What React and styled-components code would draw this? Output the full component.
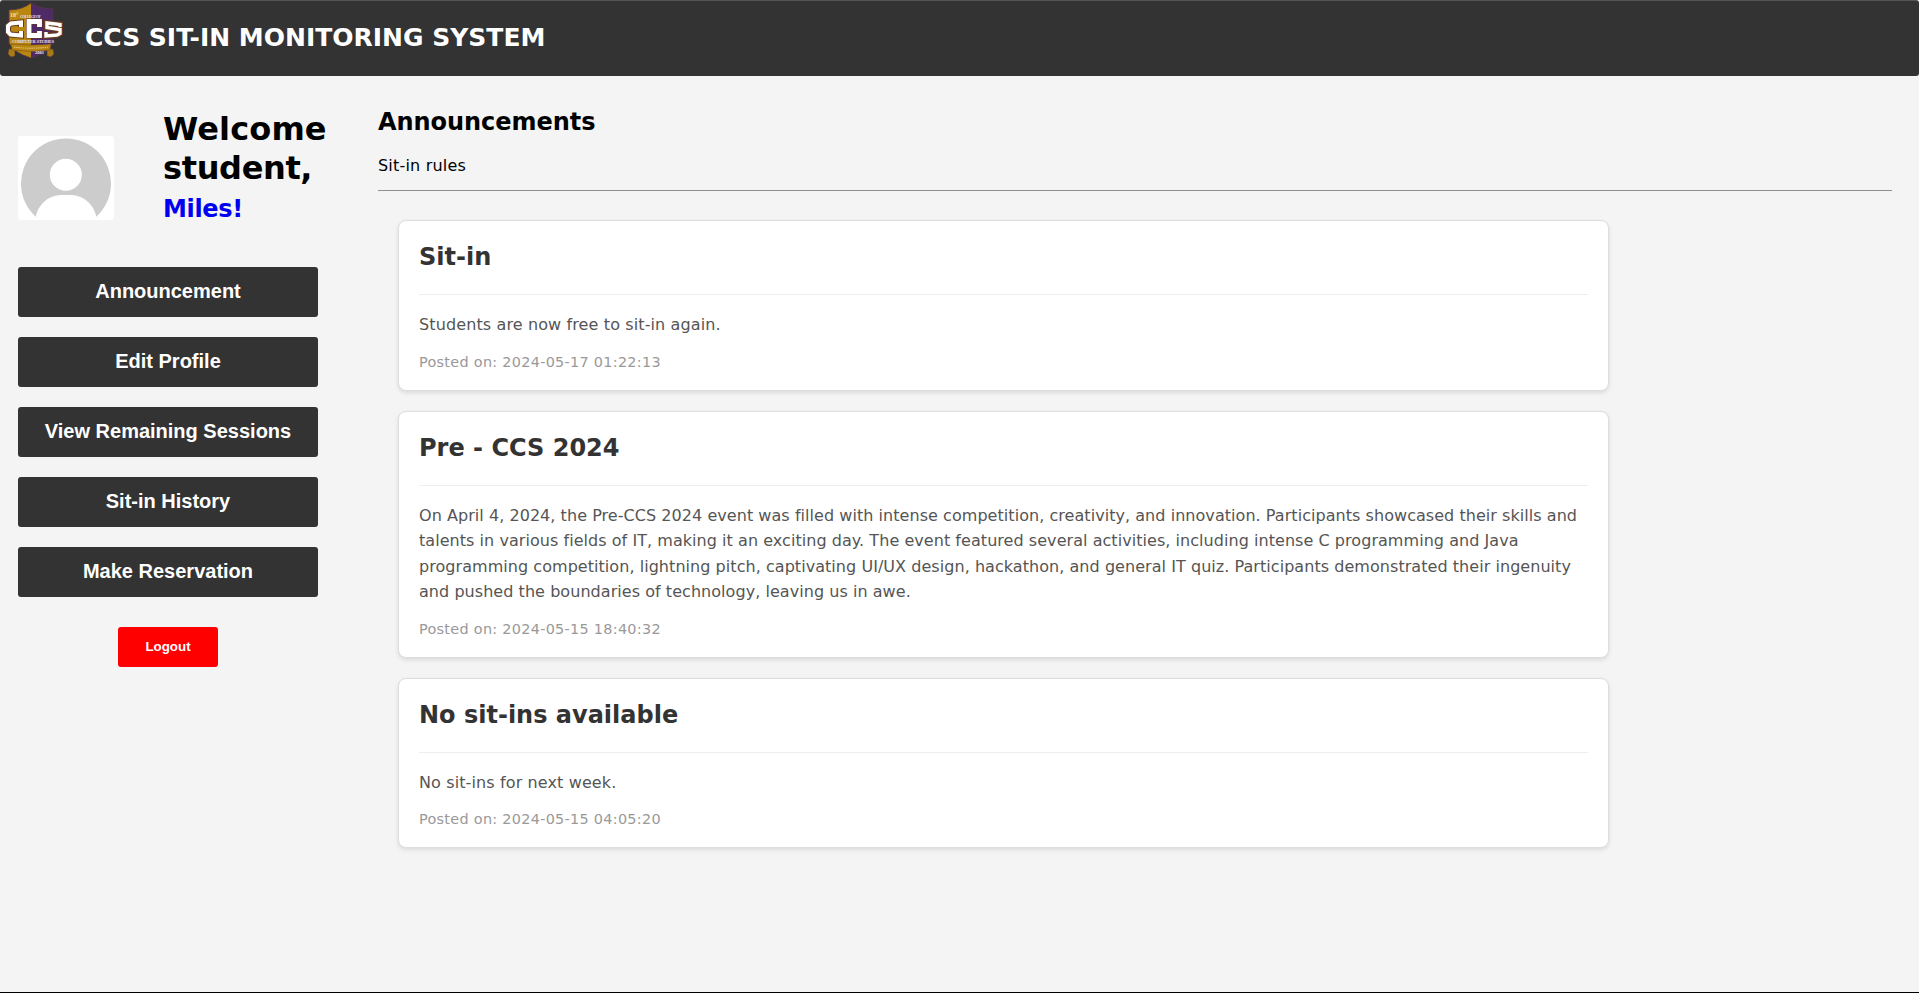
import React from 'react';
import styled, { createGlobalStyle } from 'styled-components';

const GlobalStyle = createGlobalStyle`
  * { box-sizing: border-box; }
  body {
    margin: 0;
    background: #f4f4f4;
    font-family: "DejaVu Sans", Verdana, sans-serif;
    color: #000;
  }
  h1, h2, p { margin: 0; }
`;

const Page = styled.div`
  height: 993px;
  display: flex;
  flex-direction: column;
  border-bottom: 1px solid #000;
`;

const Header = styled.header`
  flex: none;
  height: 76px;
  display: flex;
  align-items: flex-start;
  gap: 21px;
  padding: 1px 0 0 3px;
  background: #333;
  border-top: 1px solid #555;
  border-radius: 3px;
`;

const Brand = styled.h1`
  margin-top: 21px;
  font-size: 25px;
  line-height: 30px;
  color: #fff;
`;

const Body = styled.div`
  flex: 1;
  display: flex;
  align-items: flex-start;
`;

const Sidebar = styled.aside`
  width: 300px;
  margin: 34px 0 0 18px;
  display: flex;
  flex-direction: column;
  align-items: center;
`;

const Profile = styled.div`
  width: 100%;
  height: 157px;
  display: flex;
  align-items: flex-start;
  gap: 49px;
`;

const Avatar = styled.svg`
  flex: none;
  width: 96px;
  height: 84px;
  margin-top: 26px;
  border-radius: 3px;
  background: #fff;
`;

const Welcome = styled.h1`
  display: flex;
  flex-direction: column;
  font-size: 32px;
  line-height: 39px;
  letter-spacing: 0.12px;
`;

const Role = styled.span`
  letter-spacing: -0.35px;
`;

const UserName = styled.h2`
  margin-top: 7px;
  font-size: 24px;
  line-height: 29px;
  letter-spacing: -0.35px;
  color: #0000f0;
`;

const Nav = styled.nav`
  display: flex;
  flex-direction: column;
  gap: 20px;
`;

const NavButton = styled.button`
  width: 300px;
  height: 50px;
  padding: 0 0 2px;
  border: 0;
  border-radius: 3px;
  background: #333;
  color: #fff;
  font: bold 20px "Liberation Sans", Arial, sans-serif;
`;

const LogoutButton = styled(NavButton)`
  width: 100px;
  height: 40px;
  margin-top: 30px;
  background: #f00;
  font-size: 13.333px;
`;

const Main = styled.main`
  width: 1514px;
  margin: 32px 0 0 60px;
`;

const SectionTitle = styled.h2`
  font-size: 24px;
  line-height: 29px;
  letter-spacing: -0.05px;
`;

const Rules = styled.p`
  margin-top: 19px;
  padding-bottom: 15px;
  font-size: 16px;
  line-height: 19px;
  letter-spacing: 0.2px;
  border-bottom: 1px solid #909090;
`;

const CardList = styled.div`
  width: 1211px;
  margin: 29.4px 0 0 20px;
  display: flex;
  flex-direction: column;
  gap: 20px;
`;

const Card = styled.article`
  padding: 20px;
  background: #fff;
  border: 1px solid #ddd;
  border-radius: 8px;
  box-shadow: 0 2px 4px rgba(0, 0, 0, 0.1);
`;

const CardTitle = styled.h2`
  padding: 2px 0 22px;
  font-size: 24px;
  line-height: 29px;
  color: #333;
  border-bottom: 1px solid #eee;
`;

const CardText = styled.p`
  margin-top: 17px;
  font-size: 16px;
  line-height: 25.6px;
  letter-spacing: ${(p) => p.$tracking}px;
  color: #555;
`;

const Posted = styled.p`
  margin-top: 16.6px;
  font-size: 14.4px;
  line-height: 15px;
  letter-spacing: 0.3px;
  color: #999;
`;

const LogoSvg = styled.svg`
  flex: none;
  width: 61px;
  height: 60px;
  font-family: "Liberation Serif", serif;
  font-weight: bold;
`;

function Logo() {
  return (
    <LogoSvg viewBox="3 2 61 60">
      <path d="M31 3Q22 10 9 10V43Q14 53 31 58Z" fill="#b9860f" />
      <path d="M31 3Q40 9 53 9V43Q48 53 31 58Z" fill="#4e2a66" />
      <path d="M31 3Q22 10 9 10V43Q14 53 31 58Q48 53 53 43V9Q40 9 31 3Z" fill="none" stroke="#5a3350" strokeWidth="0.8" />
      <text x="10" y="16.5" fontSize="6" fill="#f1e3c2">18°</text>
      <text x="20" y="17.8" fontSize="4" textLength="21" fill="#e8dfe6">COLLEGE OF</text>
      <g fill="none" strokeLinejoin="miter">
        <g stroke="#6a3a20" strokeWidth="6">
          <path d="M21 27V22.500L11 23.500L8 26V32L10.500 34.500L21 35.500V31" />
          <path d="M39.500 27V21.500H29V35.500H39.500V31" />
          <path d="M60 27V24.500L47 23V27.500L60 29.500V33.500L57 35L46 36V32" />
        </g>
        <g stroke="#fff" strokeWidth="4">
          <path d="M21 27V22.500L11 23.500L8 26V32L10.500 34.500L21 35.500V31" />
          <path d="M39.500 27V21.500H29V35.500H39.500V31" strokeWidth="4.8" />
          <path d="M60 27V24.500L47 23V27.500L60 29.500V33.500L57 35L46 36V32" strokeWidth="3.400" />
        </g>
      </g>
      <text x="12" y="43" fontSize="4.6" textLength="42" lengthAdjust="spacingAndGlyphs" fill="#eee8ef">COMPUTER STUDIES</text>
      <path d="M9 49H15V56L11 57L8 54Z M53 49H47V56L51 57L54 54Z" fill="#a87a18" stroke="#5b3a2a" strokeWidth="0.6" />
      <path d="M11 44Q31 46 51 44L50 50Q31 53 12 50Z" fill="#b9860f" stroke="#6b4424" strokeWidth="0.5" />
      <path d="M14 47.2Q31 49.2 48 47.2" fill="none" stroke="#e5cf98" strokeWidth="1" strokeDasharray="1.4 0.8" />
      <text x="35" y="54" fontSize="4.5" fill="#eee8ef">2001</text>
    </LogoSvg>
  );
}

const navItems = ['Announcement', 'Edit Profile', 'View Remaining Sessions', 'Sit-in History', 'Make Reservation'];

const posts = [
  { title: 'Sit-in', text: 'Students are now free to sit-in again.', date: '2024-05-17 01:22:13', tracking: 0.12 },
  {
    title: 'Pre - CCS 2024',
    text: 'On April 4, 2024, the Pre-CCS 2024 event was filled with intense competition, creativity, and innovation. Participants showcased their skills and talents in various fields of IT, making it an exciting day. The event featured several activities, including intense C programming and Java programming competition, lightning pitch, captivating UI/UX design, hackathon, and general IT quiz. Participants demonstrated their ingenuity and pushed the boundaries of technology, leaving us in awe.',
    date: '2024-05-15 18:40:32',
    tracking: 0.05,
  },
  { title: 'No sit-ins available', text: 'No sit-ins for next week.', date: '2024-05-15 04:05:20', tracking: 0.12 },
];

export default function App() {
  return (
    <Page>
      <GlobalStyle />
      <Header>
        <Logo />
        <Brand>CCS SIT-IN MONITORING SYSTEM</Brand>
      </Header>
      <Body>
        <Sidebar>
          <Profile>
            <Avatar viewBox="0 0 96 84">
              <path d="M18 81A45 45 0 1 1 78 81Z" fill="#ccc" />
              <circle cx="47.8" cy="38.8" r="16" fill="#fff" />
              <path d="M17.500 81.500C20 69 29 60 42 59H54C67 60 76 69 78.500 81.500Z" fill="#fff" />
            </Avatar>
            <div>
              <Welcome>
                <span>Welcome</span>
                <Role>student,</Role>
              </Welcome>
              <UserName>Miles!</UserName>
            </div>
          </Profile>
          <Nav>
            {navItems.map((label) => (
              <NavButton key={label}>{label}</NavButton>
            ))}
          </Nav>
          <LogoutButton>Logout</LogoutButton>
        </Sidebar>
        <Main>
          <SectionTitle>Announcements</SectionTitle>
          <Rules>Sit-in rules</Rules>
          <CardList>
            {posts.map((post) => (
              <Card key={post.date}>
                <CardTitle>{post.title}</CardTitle>
                <CardText $tracking={post.tracking}>{post.text}</CardText>
                <Posted>Posted on: {post.date}</Posted>
              </Card>
            ))}
          </CardList>
        </Main>
      </Body>
    </Page>
  );
}
